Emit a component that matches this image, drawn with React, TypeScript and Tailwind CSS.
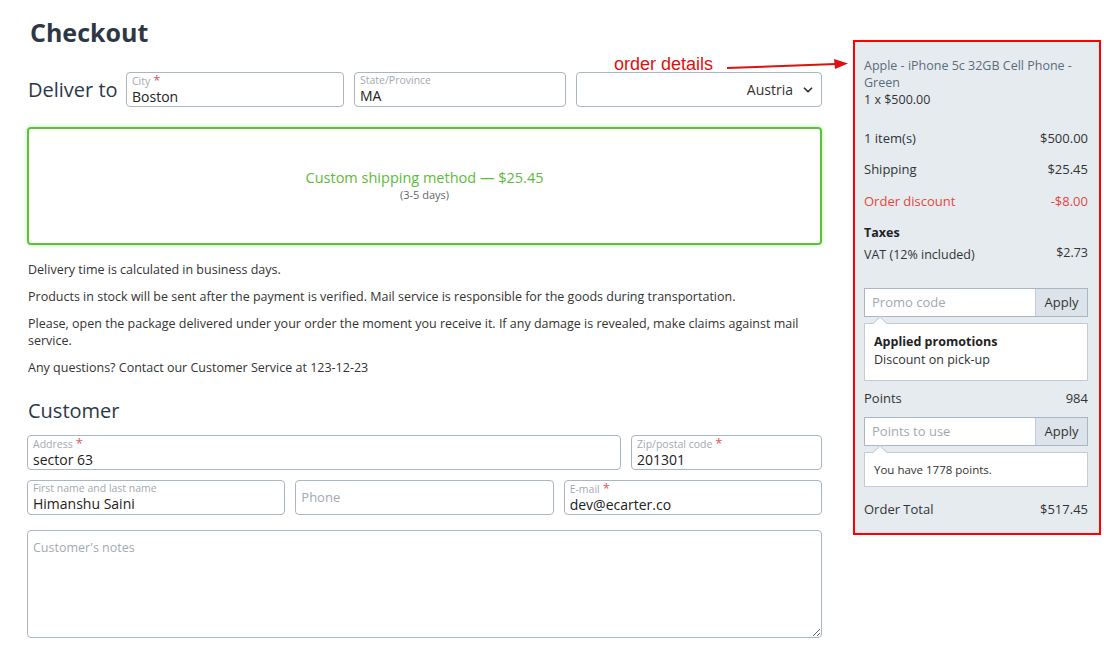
import { ChevronDown } from "lucide-react";

const font = { fontFamily: '"Open Sans", "Noto Sans", sans-serif' };

const Field = ({
  label,
  value,
  required,
  className,
}: {
  label: string;
  value?: string;
  required?: boolean;
  className?: string;
}) => {
  if (!value) {
    return (
      <div className={"h-[35px] rounded-[4px] border border-[#aab6c2] bg-white px-[5px] flex items-center " + (className || "")}>
        <span className="text-[13px] text-[#a3a9b0]">{label}</span>
      </div>
    );
  }
  return (
    <div className={"h-[35px] rounded-[4px] border border-[#aab6c2] bg-white px-[5px] pt-[1px] flex flex-col " + (className || "")}>
      <span className="text-[10.5px] leading-[13px] text-[#a3a9b0]">
        {label}
        {required && <span className="text-[#e05555] text-[13px] ml-[3px]">*</span>}
      </span>
      <span className="text-[14px] leading-[18px] text-[#222]">{value}</span>
    </div>
  );
};

const Row = ({ left, right, className }: { left: string; right: string; className?: string }) => (
  <div className={"flex justify-between text-[13px] " + (className || "")}>
    <span>{left}</span>
    <span>{right}</span>
  </div>
);

const App = () => {
  return (
    <div style={font} className="w-[1104px] h-[649px] bg-white flex overflow-hidden text-[#333]">
      <div className="w-[822px] pl-[27px] pt-[16px]">
        <h1 className="text-[25px] font-bold text-[#2d3846] pl-[3px] leading-[32px]">Checkout</h1>
        <div className="flex items-center mt-[24px] gap-[10px]">
          <span className="text-[20px] text-[#2d3846] w-[89px] shrink-0 whitespace-nowrap pl-[1px]">Deliver to</span>
          <Field label="City" value="Boston" required className="w-[218px] shrink-0" />
          <Field label="State/Province" value="MA" className="w-[212px] shrink-0" />
          <div className="flex-1 h-[35px] rounded-[4px] border border-[#aab6c2] bg-white flex items-center justify-end pr-[6px] gap-[8px]">
            <span className="text-[14px] text-[#333]">Austria</span>
            <ChevronDown size={14} strokeWidth={3} className="text-[#333]" />
          </div>
        </div>
        <div className="mt-[20px] h-[118px] rounded-[4px] border-2 border-[#5cc23a] shadow-[0_0_4px_#b7e6a8] flex flex-col items-center justify-center">
          <span className="text-[14.5px] text-[#5cbb3a] leading-[18px]">Custom shipping method — $25.45</span>
          <span className="text-[11px] text-[#666] leading-[16px]">(3-5 days)</span>
        </div>
        <div className="mt-[16px] text-[12.5px] leading-[17px] text-[#333] flex flex-col gap-[10px] pl-[1px]">
          <p>Delivery time is calculated in business days.</p>
          <p>Products in stock will be sent after the payment is verified. Mail service is responsible for the goods during transportation.</p>
          <p>Please, open the package delivered under your order the moment you receive it. If any damage is revealed, make claims against mail service.</p>
          <p>Any questions? Contact our Customer Service at 123-12-23</p>
        </div>
        <h2 className="mt-[22px] text-[20px] text-[#2d3846] leading-[26px] pl-[1px]">Customer</h2>
        <div className="mt-[11px] flex gap-[10px]">
          <Field label="Address" value="sector 63" required className="flex-1" />
          <Field label="Zip/postal code" value="201301" required className="w-[191px]" />
        </div>
        <div className="mt-[10px] flex gap-[10px]">
          <Field label="First name and last name" value="Himanshu Saini" className="flex-1" />
          <Field label="Phone" className="flex-1" />
          <Field label="E-mail" value="dev@ecarter.co" required className="flex-1" />
        </div>
        <textarea
          placeholder="Customer's notes"
          className="mt-[15px] w-full h-[108px] rounded-[4px] border border-[#aab6c2] px-[5px] py-[8px] text-[12.5px] placeholder:text-[#a3a9b0] outline-none"
        />
      </div>
      <div className="relative w-[282px] pl-[31px] pt-[40px]">
        <div className="absolute left-[-208px] top-[51px] flex items-center">
          <span style={{ fontFamily: '"Liberation Sans", Arial, sans-serif' }} className="text-[18px] text-[#e01010]">order details</span>
          <svg width="122" height="14" viewBox="0 0 122 14" className="ml-[13px]">
            <line x1="1" y1="10" x2="110" y2="6" stroke="#e01010" strokeWidth="2" />
            <polygon points="108,1 122,5.5 109,11" fill="#e01010" />
          </svg>
        </div>
        <div className="w-[248px] h-[495px] border-2 border-[#f00] bg-[#e6ebf0] pl-[9px] pr-[11px] pt-[15px]">
          <div className="text-[12.5px] leading-[17px] text-[#5b6b7c]">Apple - iPhone 5c 32GB Cell Phone - Green</div>
          <div className="text-[12.5px] leading-[17px] text-[#333]">1 x $500.00</div>
          <Row left="1 item(s)" right="$500.00" className="mt-[22px] leading-[17px]" />
          <Row left="Shipping" right="$25.45" className="mt-[14px] leading-[17px]" />
          <Row left="Order discount" right="-$8.00" className="mt-[15px] leading-[17px] text-[#e0493c]" />
          <div className="mt-[14px] text-[12.5px] font-bold leading-[17px] text-[#222]">Taxes</div>
          <div className="flex justify-between text-[12.5px] leading-[17px] mt-[5px]">
            <span>VAT (12% included)</span>
            <span className="-mt-[2px]">$2.73</span>
          </div>
          <div className="mt-[25px] flex h-[29px] border border-[#aab6c2]">
            <div className="flex-1 bg-white flex items-center pl-[7px] text-[13px] text-[#a3a9b0]">Promo code</div>
            <div className="w-[52px] bg-[#dde3ea] border-l border-[#c3ccd6] flex items-center justify-center text-[13px] text-[#333]">Apply</div>
          </div>
          <div className="relative mt-[6px] h-[58px] border border-[#c3ccd6] bg-white px-[9px] pt-[9px]">
            <div className="absolute -top-[6px] left-[10px] w-[10px] h-[10px] bg-white border-l border-t border-[#c3ccd6] rotate-45" />
            <div className="text-[12.5px] font-bold leading-[17px] text-[#222]">Applied promotions</div>
            <div className="text-[12.5px] leading-[19px] text-[#333]">Discount on pick-up</div>
          </div>
          <Row left="Points" right="984" className="mt-[9px] leading-[17px]" />
          <div className="mt-[10px] flex h-[29px] border border-[#aab6c2]">
            <div className="flex-1 bg-white flex items-center pl-[7px] text-[13px] text-[#a3a9b0]">Points to use</div>
            <div className="w-[52px] bg-[#dde3ea] border-l border-[#c3ccd6] flex items-center justify-center text-[13px] text-[#333]">Apply</div>
          </div>
          <div className="relative mt-[6px] h-[35px] border border-[#c3ccd6] bg-white px-[9px] flex items-center">
            <div className="absolute -top-[6px] left-[10px] w-[10px] h-[10px] bg-white border-l border-t border-[#c3ccd6] rotate-45" />
            <span className="text-[11.5px] text-[#333]">You have 1778 points.</span>
          </div>
          <Row left="Order Total" right="$517.45" className="mt-[14px] leading-[17px]" />
        </div>
      </div>
    </div>
  );
};

export default App;
